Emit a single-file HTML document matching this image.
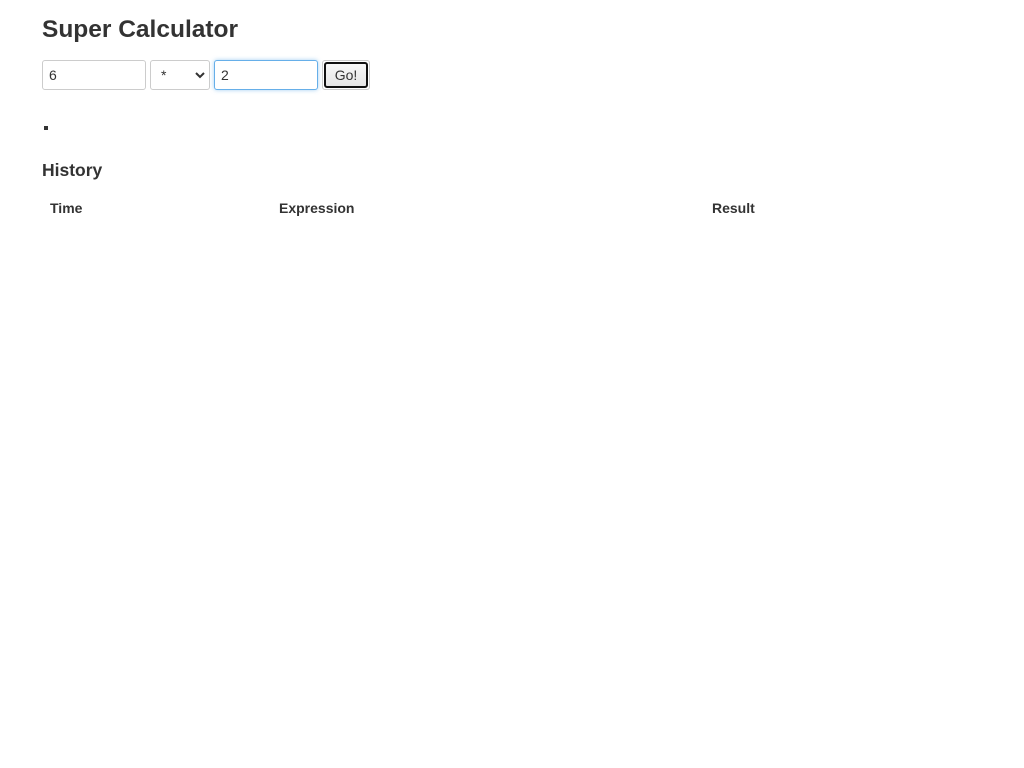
<!DOCTYPE html>
<html><head><style>
body{margin:0;font-family:"Liberation Sans",Arial,sans-serif;color:#333;background:#fff;font-size:14px}
h1{position:absolute;left:42px;top:15px;margin:0;font-size:24.5px;font-weight:bold;line-height:30px}
.in{position:absolute;top:60px;border:1px solid #ccc;border-radius:3px;box-sizing:border-box;height:30px;font-size:14px;padding:0 6px;line-height:28px;background:#fff}
.btn{position:absolute;left:322px;top:60px;width:48px;height:30px;box-sizing:border-box;border:1px solid #ccc;border-radius:3px;background:#fff}
.btn div{position:absolute;left:1px;top:1px;right:1px;bottom:1px;border:2px solid #111;border-radius:3px;background:linear-gradient(#f8f8f8,#e6e6e6);text-align:center;line-height:22px;font-size:14px;color:#333}
.dot{position:absolute;left:44px;top:126px;width:4px;height:4px;background:#333}
h3{position:absolute;left:42px;top:160px;margin:0;font-size:17.5px;font-weight:bold}
.th{position:absolute;top:200px;font-weight:bold;font-size:14px}
</style></head><body>
<h1>Super Calculator</h1>
<div class="in" style="left:42px;width:104px">6</div>
<div class="in" style="left:150px;width:60px;padding-left:10px">*<svg style="position:absolute;right:4px;top:11px" width="10" height="7" viewBox="0 0 10 7"><path d="M1 1l4 4 4-4" fill="none" stroke="#333" stroke-width="2"/></svg></div>
<div class="in" style="left:214px;width:104px;border-color:#66afe9;box-shadow:0 0 4px rgba(102,175,233,.6)">2</div>
<div class="btn"><div>Go!</div></div>
<div class="dot"></div>
<h3>History</h3>
<div class="th" style="left:50px">Time</div>
<div class="th" style="left:279px">Expression</div>
<div class="th" style="left:712px">Result</div>
</body></html>
